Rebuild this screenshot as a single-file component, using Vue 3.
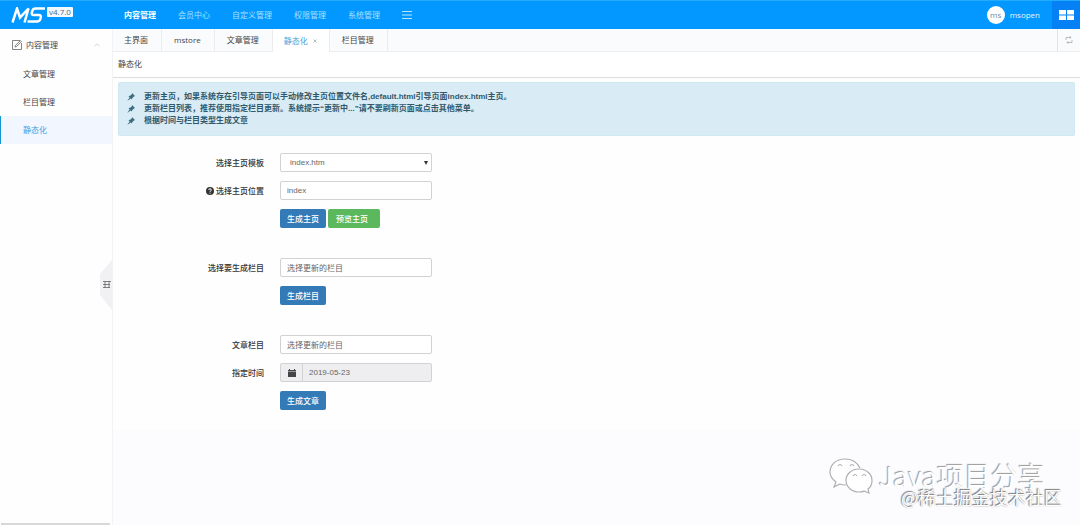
<script setup>
import { ref } from 'vue'

const topMenus = ['内容管理', '会员中心', '自定义管理', '权限管理', '系统管理']
const sideItems = ['文章管理', '栏目管理', '静态化']
const tabs = ['主界面', 'mstore', '文章管理', '静态化', '栏目管理']
const active = ref('静态化')
const notes = [
  '更新主页，如果系统存在引导页面可以手动修改主页位置文件名,default.html引导页面index.html主页。',
  '更新栏目列表，推荐使用指定栏目更新。系统提示“更新中...”请不要刷新页面或点击其他菜单。',
  '根据时间与栏目类型生成文章',
]
const template = ref('index.htm')
const position = ref('index')
const listColumn = ref('选择更新的栏目')
const articleColumn = ref('选择更新的栏目')
const date = ref('2019-05-23')
</script>

<template>
  <div class="page">
    <header class="header">
      <div class="brand">
        <svg class="logo" viewBox="0 0 34 16" aria-label="MS">
          <path d="M1.500 15.500 6 1.500 9 10.500 17.500 1.500 13.500 15.500M34 1.500H24.500Q22 1.500 21.300 4L20.900 5.500Q20.300 8 22.500 8H28Q30.300 8 29.700 10.500L29.300 12Q28.700 14.500 26 14.500H16.500" />
        </svg>
        <span class="version">v4.7.0</span>
      </div>
      <nav class="menus">
        <a v-for="(m, i) in topMenus" :key="m" href="#" :class="{ current: i === 0 }">{{ m }}</a>
        <button class="burger" aria-label="菜单">
          <svg viewBox="0 0 10 8"><path d="M0 .5h10M0 4h10M0 7.500h10" /></svg>
        </button>
      </nav>
      <a class="user" href="#"><span class="avatar">ms</span>msopen</a>
      <button class="grid-button" aria-label="应用">
        <svg viewBox="0 0 15 10"><path d="M0 0h7v4.500H0zM8 0h7v4.500H8zM0 5.500h7V10H0zM8 5.500h7V10H8z" /></svg>
      </button>
    </header>

    <div class="body">
      <aside class="side">
        <button class="side-head">
          <svg class="edit" viewBox="0 0 10 10"><path d="M8 .5H.5v9h9V3M3 7l.4-1.600L8.500.6l.9.900L4.600 6.600z" /></svg>
          <span>内容管理</span>
          <svg class="caret" viewBox="0 0 6 4"><path d="M.5 3 3 1l2.500 2" /></svg>
        </button>
        <a v-for="s in sideItems" :key="s" href="#" class="side-item" :class="{ on: s === '静态化' }">{{ s }}</a>
        <button class="handle" aria-label="收起">
          <svg viewBox="0 0 12 50"><path class="flap" d="M12 0v50L0 35V14z" /><path class="bars" d="M3 21.500h8M3 24.500h7M3 27.500h7M5 21v7M9 21v7" /></svg>
        </button>
        <div class="scrollbar"></div>
      </aside>

      <main class="main">
        <div class="tabs">
          <button v-for="t in tabs" :key="t" class="tab" :class="{ on: t === active }" @click="active = t">
            {{ t }}<svg v-if="t === active" class="close" viewBox="0 0 4 4"><path d="m.5.5 3 3m0-3-3 3" /></svg>
          </button>
          <button class="refresh" aria-label="刷新">
            <svg viewBox="0 0 8 8"><path d="M1 4V1.500h5M4.800.3 6 1.500 4.800 2.700M7 4v2.500H2M3.200 5.300 2 6.500l1.200 1.200" /></svg>
          </button>
        </div>
        <h1 class="title">静态化</h1>
        <div class="content">
          <ul class="alert">
            <li v-for="n in notes" :key="n">
              <svg viewBox="0 0 8 8"><path d="M5 0 8 3 7 3.400 5.300 5 5 6.500 3.700 5.500.3 8 2.600 4.400 1.500 3l1.700-.2L4.800 1.200z" /></svg>
              <span>{{ n }}</span>
            </li>
          </ul>

          <form class="form" @submit.prevent>
            <section class="group">
              <div class="row">
                <label for="tpl">选择主页模板</label>
                <div class="field select-box">
                  <select id="tpl" v-model="template"><option>index.htm</option></select>
                </div>
              </div>
              <div class="row">
                <label for="pos">
                  <svg class="help" viewBox="0 0 8 8"><circle cx="4" cy="4" r="4" /><path d="M2.700 3Q2.800 1.700 4 1.700T5.300 3Q5.300 3.700 4.600 4T4 5M4 5.700v1" /></svg>选择主页位置
                </label>
                <input id="pos" v-model="position" class="field" type="text">
              </div>
              <div class="row actions">
                <button class="btn">生成主页</button>
                <button class="btn green">预览主页</button>
              </div>
            </section>
            <section class="group">
              <div class="row">
                <label for="list">选择要生成栏目</label>
                <input id="list" v-model="listColumn" class="field" type="text">
              </div>
              <div class="row actions"><button class="btn">生成栏目</button></div>
            </section>
            <section class="group">
              <div class="row">
                <label for="article">文章栏目</label>
                <input id="article" v-model="articleColumn" class="field" type="text">
              </div>
              <div class="row">
                <label for="date">指定时间</label>
                <div class="field date">
                  <span class="addon"><svg viewBox="0 0 8 8"><path d="M0 1h1V0h1v1h4V0h1v1h1v1.500H0zM0 3h8v5H0z" /></svg></span>
                  <input id="date" v-model="date" type="text" readonly>
                </div>
              </div>
              <div class="row actions"><button class="btn">生成文章</button></div>
            </section>
          </form>
        </div>
      </main>
    </div>

    <div class="wechat">
      <svg viewBox="0 0 44 36">
        <path d="M16 1C7 1 1 7 1 14c0 4 2 7 6 10l-2 5 6-3c2 1 4 1 6 1M31 10C28 4 23 1 16 1" />
        <path d="M30 11c-7 0-13 5-13 11.500S23 34 30 34c2 0 4 0 5-1l5 2-1-4c3-2 4-5 4-8.500C43 16 37 11 30 11z" />
        <path class="eyes" d="M9 8q2-3 4 0M21 8q2-3 4 0M24 18q2-3 4 0M33 18q2-3 4 0" />
      </svg>
      <span>Java项目分享</span>
    </div>
    <div class="community">@稀土掘金技术社区</div>
  </div>
</template>

<style>
body {
  margin: 0;
}
</style>

<style scoped>
.page {
  position: relative;
  display: flex;
  flex-direction: column;
  min-height: 100vh;
  overflow: hidden;
  background: #fcfbfe;
  color: #444;
  font: 8px/12px "Open Sans", "Noto Sans CJK SC", sans-serif;
}
* {
  box-sizing: border-box;
}
a {
  color: inherit;
  text-decoration: none;
}
button,
input,
select {
  margin: 0;
  padding: 0;
  border: 0;
  background: none;
  color: inherit;
  font: inherit;
}
svg {
  display: block;
  flex: none;
}
.header {
  display: flex;
  height: 29px;
  background: #0398ff;
  border-top: 1px solid #22abfa;
  color: #a5e0ff;
}
.brand {
  display: flex;
  width: 112px;
  padding: 6px 0 0 11px;
}
.logo {
  width: 34px;
  height: 16px;
  fill: none;
  stroke: #fff;
  stroke-width: 2.5;
}
.version {
  height: 10px;
  margin-left: 2px;
  padding: 0 2px;
  border-radius: 1px;
  background: #f2faff;
  color: #4b6a8a;
  font-size: 8px;
  line-height: 9px;
}
.menus {
  display: flex;
  flex: 1;
  align-items: center;
  gap: 22px;
  padding-left: 12px;
}
.menus .current {
  color: #fff;
  font-weight: bold;
}
.burger svg {
  width: 10px;
  height: 8px;
  fill: none;
  stroke: #b5e5ff;
}
.user {
  display: flex;
  align-items: center;
  gap: 5px;
  margin-right: 12px;
  color: #e2f5ff;
}
.avatar {
  width: 18px;
  height: 18px;
  border-radius: 50%;
  background: #fff;
  color: #6a8ba8;
  line-height: 17px;
  text-align: center;
}
.grid-button {
  display: grid;
  place-items: center;
  width: 28px;
  background: #0581f5;
}
.grid-button svg {
  width: 15px;
  height: 10px;
  fill: #fff;
}
.body {
  display: flex;
  flex: 1;
}
.side {
  position: relative;
  display: flex;
  flex-direction: column;
  width: 113px;
  border-right: 1px solid #f3f3f6;
  background: #fefefe;
}
.side-head {
  display: flex;
  align-items: center;
  gap: 4px;
  height: 31px;
  padding: 0 12px;
}
.edit {
  width: 10px;
  height: 10px;
  fill: none;
  stroke: #666;
  stroke-width: 0.8;
}
.caret {
  width: 6px;
  height: 4px;
  margin-left: auto;
  fill: none;
  stroke: #ccc;
  stroke-width: 0.8;
}
.side-item {
  height: 28px;
  padding-left: 22px;
  border-left: 1px solid transparent;
  line-height: 28px;
}
.side-item.on {
  border-color: #1598cf;
  background: #f1f6ff;
  color: #4aa2e4;
}
.handle {
  position: absolute;
  top: 231px;
  right: 0;
}
.handle svg {
  width: 12px;
  height: 50px;
}
.flap {
  fill: #f1f1f3;
}
.bars {
  fill: none;
  stroke: #666;
  stroke-width: 0.8;
}
.scrollbar {
  height: 2px;
  margin: auto 2px 0 1px;
  background: #d8d8d8;
}
.main {
  flex: 1;
  min-width: 0;
}
.tabs {
  display: flex;
  height: 23px;
  border-bottom: 1px solid #eee;
  background: #fafbfc;
}
.tab {
  display: flex;
  align-items: center;
  gap: 5px;
  padding: 0 13px 0 12px;
  border-right: 1px solid #ececee;
}
.tab:first-child {
  padding-left: 11px;
}
.tab.on {
  height: 23px;
  padding: 0 12px 0 11px;
  background: #fff;
  color: #49a3dc;
}
.close {
  width: 4px;
  height: 4px;
  fill: none;
  stroke: #aaa;
  stroke-width: 0.8;
}
.refresh {
  display: grid;
  place-items: center;
  width: 23px;
  margin-left: auto;
  border-left: 1px solid #e4e4e6;
}
.refresh svg {
  width: 8px;
  height: 8px;
  fill: none;
  stroke: #aaa;
  stroke-width: 0.8;
}
.title {
  height: 26px;
  margin: 0;
  padding-left: 5px;
  border-bottom: 1px solid #ddd;
  background: #fff;
  font-size: 8px;
  font-weight: normal;
  line-height: 24px;
}
.content {
  padding: 4px 5px 20px;
  background: #fefefe;
}
.alert {
  display: flex;
  flex-direction: column;
  height: 54px;
  margin: 0;
  padding: 8px;
  border: 1px solid #d0e9f1;
  border-radius: 2px;
  background: #d9ecf6;
  color: #31596b;
  font-family: "Liberation Sans", "Noto Sans CJK SC", sans-serif;
  font-weight: 600;
  list-style: none;
}
.alert li {
  display: flex;
  gap: 9px;
}
.alert svg {
  width: 8px;
  height: 8px;
  margin-top: 2px;
  fill: #3d6d80;
}
.form {
  display: flex;
  flex-direction: column;
  gap: 30px;
  padding-top: 17px;
}
.group {
  display: flex;
  flex-direction: column;
  gap: 9px;
}
.row {
  display: flex;
  align-items: center;
  height: 19px;
}
.row label {
  display: flex;
  align-items: center;
  justify-content: flex-end;
  width: 146px;
  margin-right: 16px;
  font-weight: 500;
  color: #333;
}
.help {
  width: 8px;
  height: 8px;
  margin-right: 2px;
  fill: #333;
}
.help path {
  fill: none;
  stroke: #fff;
}
.field {
  width: 152px;
  height: 19px;
  padding: 0 6px;
  border: 1px solid #d2d2d4;
  border-radius: 2px;
  background: #fff;
  color: #666;
  font-family: "Liberation Sans", "Noto Sans CJK SC", sans-serif;
}
.select-box {
  position: relative;
  padding: 0;
}
.select-box select {
  display: block;
  width: 100%;
  height: 17px;
  padding-left: 9px;
  appearance: none;
}
.select-box::after {
  position: absolute;
  top: 7px;
  right: 3px;
  border: 2px solid transparent;
  border-top: 4px solid #333;
  border-bottom: 0;
  content: "";
  pointer-events: none;
}
.date {
  display: flex;
  padding: 0;
  background: #eeedef;
}
.date input {
  flex: 1;
  min-width: 0;
  padding-left: 6px;
}
.addon {
  display: grid;
  place-items: center;
  width: 22px;
  border-right: 1px solid #d2d2d4;
}
.addon svg {
  width: 8px;
  height: 8px;
  fill: #444;
}
.actions {
  gap: 2px;
  padding-left: 162px;
}
.btn {
  height: 19px;
  padding: 0 7px;
  border-radius: 2px;
  background: #347ab7;
  color: #fff;
  font-weight: 500;
}
.btn.green {
  padding: 0 12px 0 8px;
  background: #5cb85c;
}
.wechat,
.community {
  position: absolute;
  color: #fff;
  white-space: nowrap;
}
.wechat {
  right: 35px;
  bottom: 31px;
  display: flex;
  align-items: center;
  gap: 6px;
  font: 27px/36px "Noto Sans CJK SC", sans-serif;
  text-shadow: -1px -1px 1px #999;
}
.wechat svg {
  width: 44px;
  height: 36px;
  fill: #fff;
  stroke: #b0b0b4;
  stroke-width: 1.2;
}
.wechat .eyes {
  fill: none;
}
.community {
  right: 18px;
  bottom: 17px;
  font: 18px/22px "Noto Sans CJK SC", sans-serif;
  text-shadow: -1px -1px 1px #777, 0 0 1px #999;
}
</style>
